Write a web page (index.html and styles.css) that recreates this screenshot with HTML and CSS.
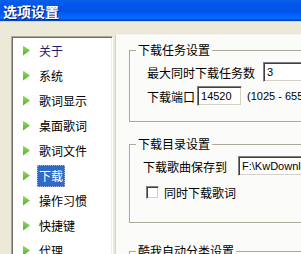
FILE: index.html
```html
<!DOCTYPE html>
<html>
<head>
<meta charset="utf-8">
<link rel="stylesheet" href="styles.css">
</head>
<body>
<div class="window">
  <div class="titlebar"><span class="title">选项设置</span></div>
  <div class="main">
    <ul class="nav">
      <li class="item first"><span class="arrow"></span><span class="label">关于</span></li>
      <li class="item"><span class="arrow"></span><span class="label">系统</span></li>
      <li class="item"><span class="arrow"></span><span class="label">歌词显示</span></li>
      <li class="item"><span class="arrow"></span><span class="label">桌面歌词</span></li>
      <li class="item"><span class="arrow"></span><span class="label">歌词文件</span></li>
      <li class="item active"><span class="arrow"></span><span class="label">下载</span></li>
      <li class="item"><span class="arrow"></span><span class="label">操作习惯</span></li>
      <li class="item"><span class="arrow"></span><span class="label">快捷键</span></li>
      <li class="item"><span class="arrow"></span><span class="label">代理</span></li>
    </ul>
    <div class="panel">
      <fieldset class="group g1">
        <legend>下载任务设置</legend>
        <div class="inner">
          <div class="row">
            <span class="text">最大同时下载任务数</span>
            <span class="input max">3</span>
          </div>
          <div class="row">
            <span class="text">下载端口</span>
            <span class="input port">14520</span>
            <span class="hint">(1025 - 65535)</span>
          </div>
        </div>
      </fieldset>
      <fieldset class="group g2">
        <legend>下载目录设置</legend>
        <div class="inner">
          <div class="row">
            <span class="text">下载歌曲保存到</span>
            <span class="input path">F:\KwDownload\song</span>
          </div>
          <div class="row check-row">
            <span class="checkbox"></span>
            <span class="text">同时下载歌词</span>
          </div>
        </div>
      </fieldset>
      <fieldset class="group g3">
        <legend>酷我自动分类设置</legend>
        <div class="inner"></div>
      </fieldset>
    </div>
  </div>
</div>
</body>
</html>
```

FILE: styles.css
```css
html, body {
  margin: 0;
  padding: 0;
}
body {
  width: 301px;
  height: 254px;
  overflow: hidden;
  background: #ECE9D8;
  font-family: "Noto Sans CJK SC", sans-serif;
  font-size: 12px;
  color: #000;
}
.window {
  width: 301px;
  height: 254px;
  overflow: hidden;
}
.titlebar {
  height: 21px;
  display: flex;
  align-items: center;
  padding-left: 3px;
  background: linear-gradient(to bottom, #0A5FE6 0%, #0058EE 20%, #0053E4 55%, #0062FF 72%, #0A6CFF 86%, #0052DA 94%, #003CAE 100%);
  border-bottom: 1px solid #D9D6C8;
}
.title {
  font-weight: bold;
  font-size: 14px;
  line-height: 14px;
  color: #fff;
  text-shadow: 1px 1px 0 #0A1A7A;
}
.main {
  display: flex;
  align-items: flex-start;
  padding: 14px 0 0 11px;
}
.nav {
  flex: none;
  list-style: none;
  margin: 0;
  padding: 1px;
  width: 98px;
  height: 240px;
  background: #fff;
  border: 1px solid;
  border-color: #ACA899 #fff #fff #ACA899;
  box-shadow: inset 1px 1px 0 #716F64, inset -1px -1px 0 #F1EFE2;
  box-sizing: content-box;
}
.item {
  height: 25px;
  display: flex;
  align-items: center;
  padding-left: 10px;
  white-space: nowrap;
}
.arrow {
  flex: none;
  width: 7px;
  height: 10px;
  background: linear-gradient(to bottom, #93DD5A, #4CB024);
  clip-path: polygon(0 0, 100% 50%, 0 100%);
}
.label {
  margin-left: 7px;
  padding: 0 2px;
  line-height: 22px;
}
.item.first .label {
  color: #1E1E6E;
}
.item.active .label {
  background: #316AC5;
  color: #fff;
  outline: 1px dotted #9DB8E8;
  outline-offset: -1px;
}
.panel {
  flex: none;
  margin-left: 2px;
  margin-top: -2px;
  width: 260px;
  height: 260px;
  background: #FBFBF9;
  border-left: 1px solid #D6D3C6;
  border-top: 1px solid #F5F4EE;
  padding: 7px 0 0 13px;
  box-sizing: border-box;
}
.group {
  margin: 0;
  padding: 0;
  width: 240px;
  border: 1px solid #ACA899;
  box-shadow: 1px 1px 0 #fff, inset 1px 1px 0 #fff;
}
.group legend {
  margin-left: 6px;
  padding: 0 2px;
  line-height: 16px;
}
.inner {
  padding: 0 0 0 17px;
}
.g1 .inner {
  padding-top: 4px;
  padding-bottom: 15px;
}
.g1 .row + .row {
  margin-top: 4px;
}
.g2 {
  margin-top: 14px;
}
.g2 .inner {
  padding-left: 13px;
  padding-top: 4px;
  padding-bottom: 20px;
}
.g3 {
  margin-top: 20px;
}
.g3 .inner {
  height: 40px;
}
.row {
  display: flex;
  align-items: center;
  height: 20px;
  white-space: nowrap;
}
.text {
  flex: none;
}
.input {
  flex: none;
  box-sizing: border-box;
  height: 20px;
  background: #fff;
  border: 1px solid;
  border-color: #808080 #fff #fff #808080;
  box-shadow: inset 1px 1px 0 #404040, inset -1px -1px 0 #D4D0C8;
  font-family: "Liberation Sans", sans-serif;
  font-size: 11px;
  line-height: 18px;
  padding-left: 3px;
  white-space: nowrap;
  overflow: hidden;
}
.max {
  margin-left: 8px;
  width: 70px;
}
.port {
  margin-left: 2px;
  width: 45px;
}
.hint {
  flex: none;
  margin-left: 5px;
  font-family: "Liberation Sans", sans-serif;
  font-size: 11px;
}
.path {
  margin-left: 11px;
  width: 100px;
}
.check-row {
  margin-top: 6px;
  padding-left: 3px;
}
.checkbox {
  flex: none;
  box-sizing: border-box;
  width: 13px;
  height: 13px;
  background: #fff;
  border: 1px solid;
  border-color: #808080 #fff #fff #808080;
  box-shadow: inset 1px 1px 0 #404040, inset -1px -1px 0 #D4D0C8;
  margin-right: 5px;
}
```
